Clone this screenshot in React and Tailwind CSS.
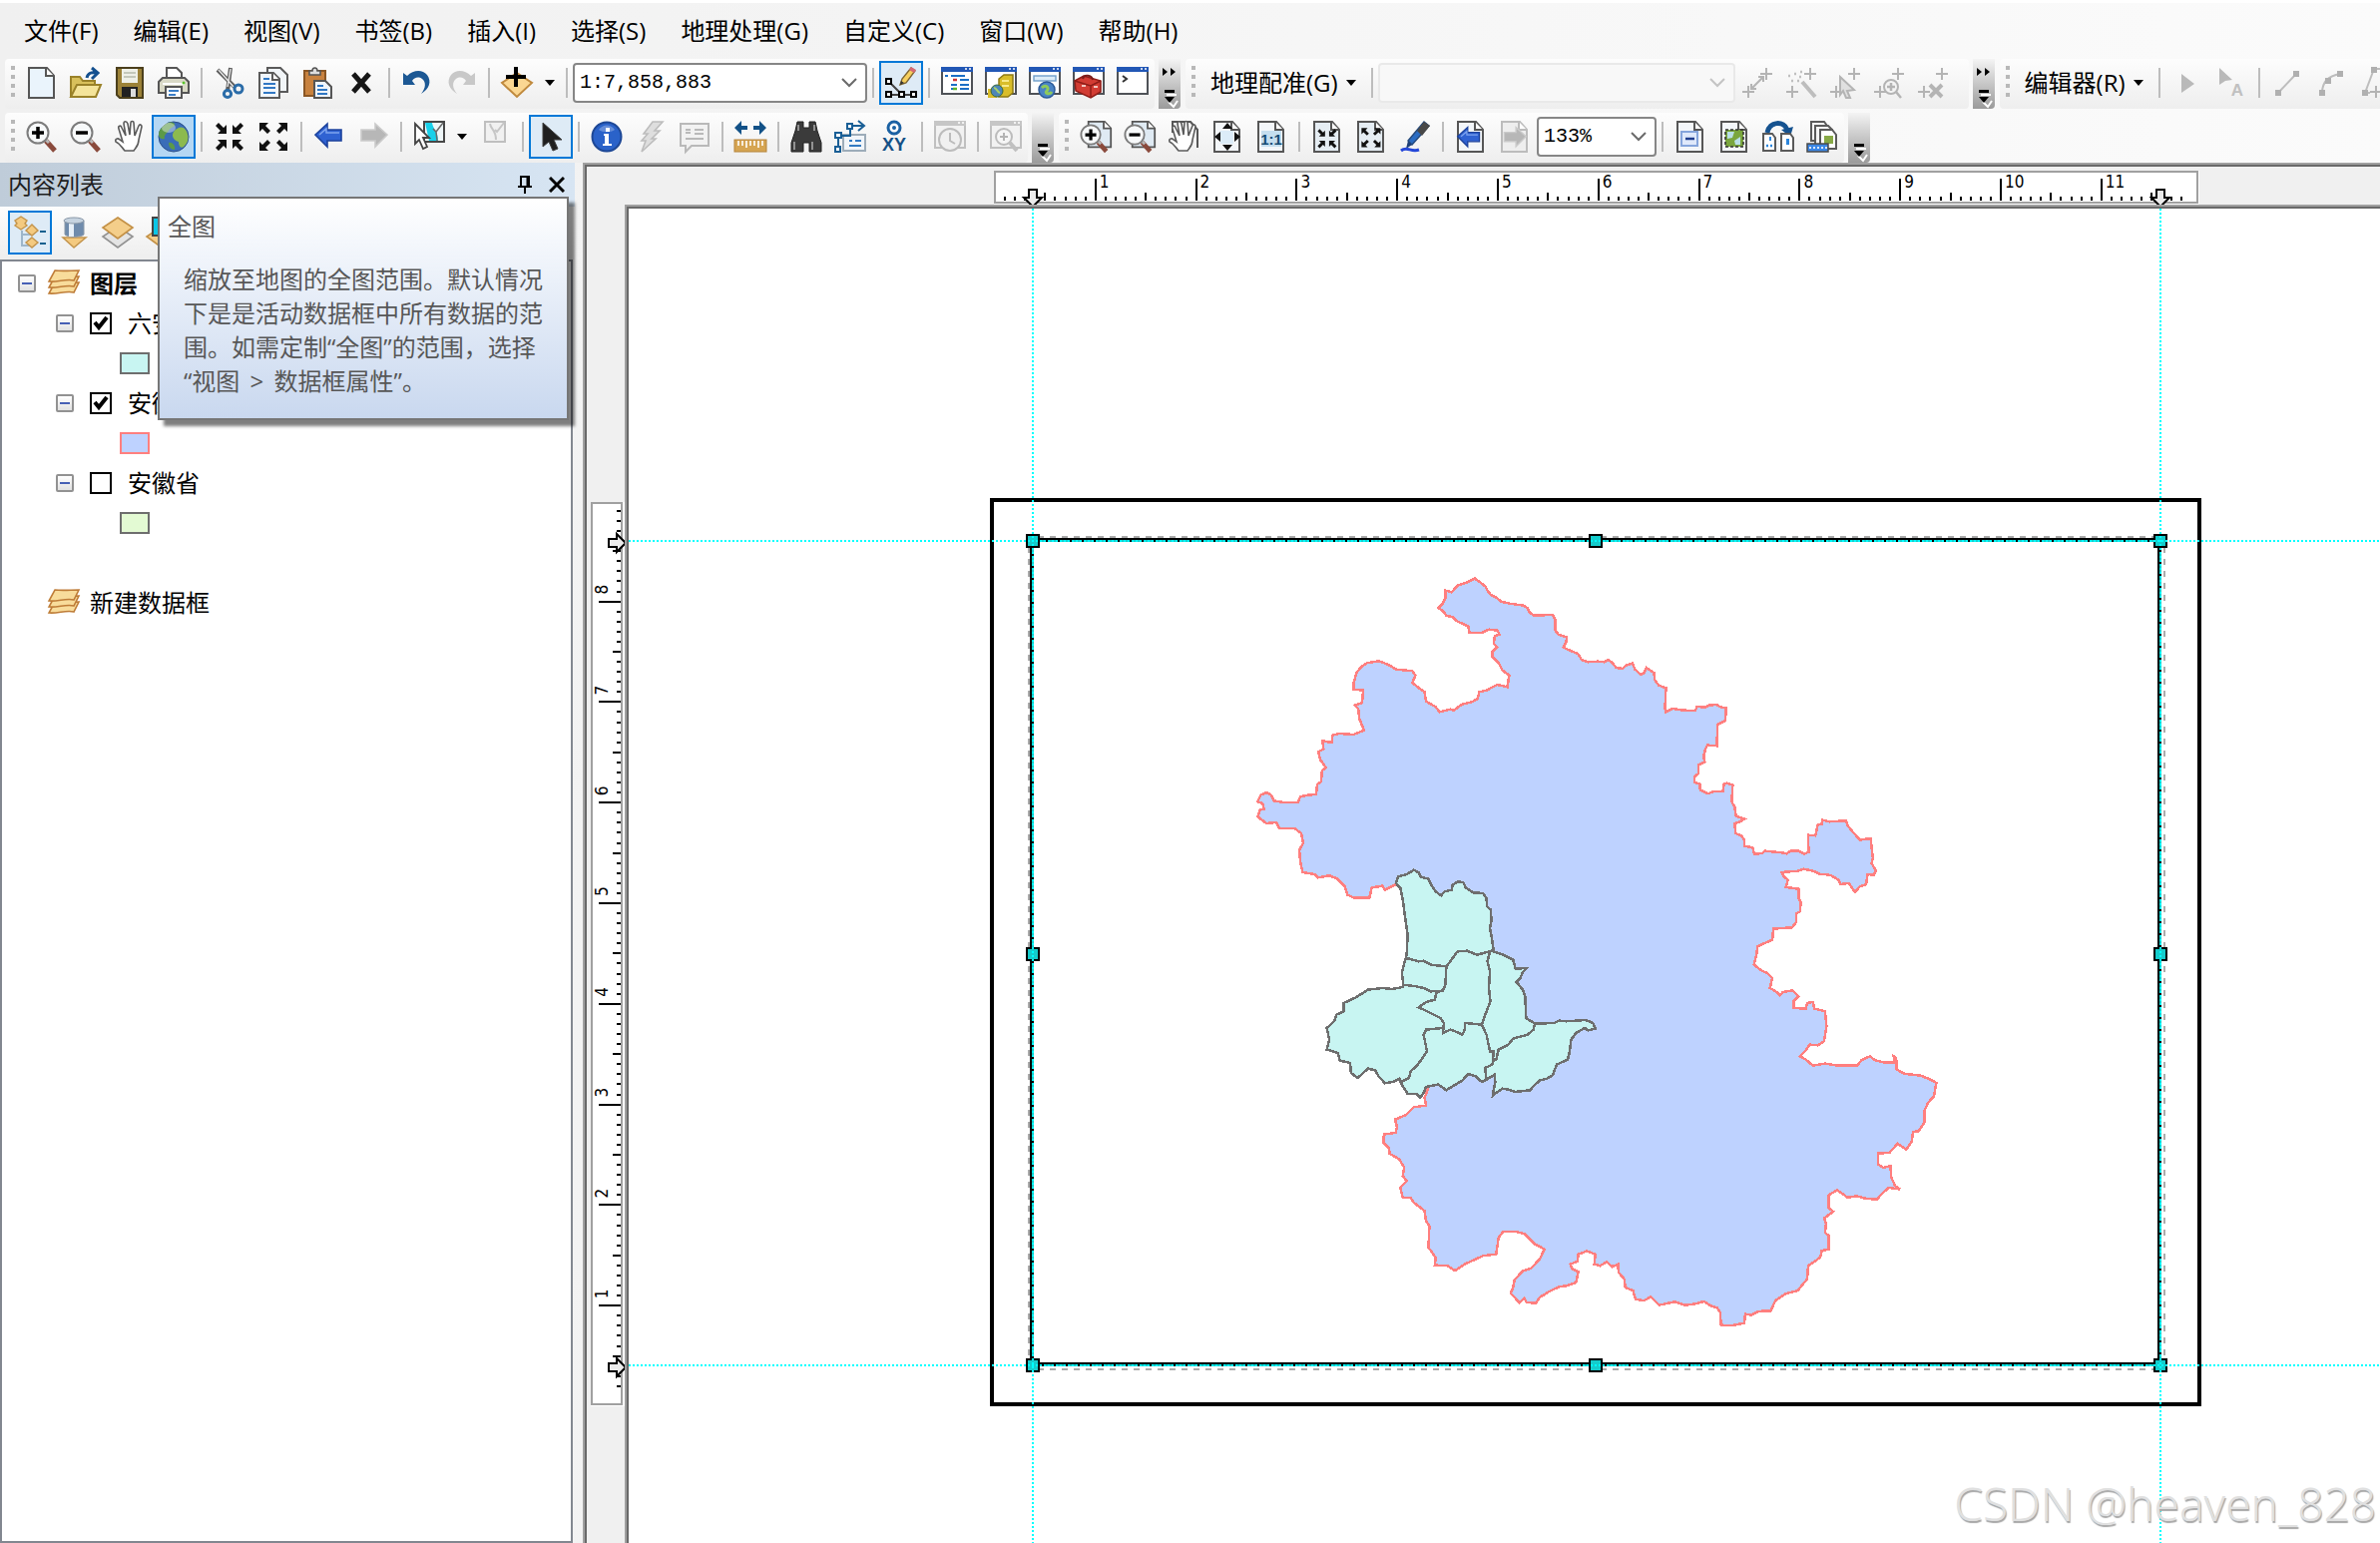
import React, { useState } from 'react'
import clsx from 'clsx'

const UI_FONT = "font-['Open_Sans','Noto_Sans_CJK_SC',sans-serif]"
const MONO_FONT = "font-['Liberation_Mono','Noto_Sans_CJK_SC',monospace]"

const MENUS = [
  '文件(F)', '编辑(E)', '视图(V)', '书签(B)', '插入(I)',
  '选择(S)', '地理处理(G)', '自定义(C)', '窗口(W)', '帮助(H)'
]

/* ---------- Shared icon parts (32 x 32 grid) ---------- */

const Page = ({ color = '#565656', fill = '#f3f6f9' }) => (
  <>
    <path d="M3 1h18l7 8v22H3z" fill={fill} stroke={color} strokeWidth="2" />
    <path d="M20 1v8h8" fill="#fff" stroke={color} strokeWidth="2" />
  </>
)

const Frame = ({ color = '#4f5257', bar = '#2257b5', fill = '#fff' }) => (
  <>
    <rect x="1" y="1" width="30" height="26" fill={fill} stroke={color} strokeWidth="2" />
    <rect x="0" y="0" width="32" height="5" fill={bar} />
    <path d="M24 2h2M28 2h2" stroke="#fff" strokeWidth="1.5" />
  </>
)

const Lens = ({ plus, minus }) => (
  <>
    <path d="M20 20l9 10" stroke="#8a4a3c" strokeWidth="5" />
    <path d="M19 18l4 4" stroke="#b9b9b9" strokeWidth="3" />
    <circle cx="12" cy="12" r="10.5" fill="#f7f9fa" stroke="#7c7c7c" strokeWidth="2" />
    {plus && <path d="M6 12h12M12 6v12" stroke="#000" strokeWidth="3.5" />}
    {minus && <path d="M6 12h12" stroke="#000" strokeWidth="3.5" />}
  </>
)

const Hand = () => (
  <path
    d="M11 30c-3-3-4-7-9-9-1-3 2-4 4-2l3 2-4-13c-1-3 2-4 3-1l4 8-2-12c0-3 3-3 4 0l2 11 1-12c0-2 3-2 3 0l1 13 4-10c1-2 3-1 3 1l-3 13c0 6-3 8-5 11z"
    fill="#fff" stroke="#5b5b5b" strokeWidth="1.6"
  />
)

const ArrowLeft = () => (
  <>
    <path d="M2 14L14 3v6h14v11H14v6z" fill="#2f62d2" stroke="#1c429c" strokeWidth="1.6" />
    <path d="M6 14l7-6v4h13" fill="none" stroke="#7ea4ee" strokeWidth="1.5" />
  </>
)

const ArrowRight = () => (
  <path d="M30 14L18 3v6H4v11h14v6z" fill="#b7b7b7" stroke="#cbcbcb" strokeWidth="1.6" />
)

const Inward = () => (
  <path d="M13 13H4l3-3-5-5 3-3 5 5 3-3zM19 13h9l-3-3 5-5-3-3-5 5-3-3zM13 19H4l3 3-5 5 3 3 5-5 3 3zM19 19h9l-3 3 5 5-3 3-5-5-3 3z" fill="#111" />
)

const Outward = () => (
  <path d="M2 2h9L8 5l5 5-3 3-5-5-3 3zM30 2h-9l3 3-5 5 3 3 5-5 3 3zM2 30h9l-3-3 5-5-3-3-5 5-3-3zM30 30h-9l3-3-5-5 3-3 5 5 3-3z" fill="#111" />
)

const TURN = 'M2 6l4 3C12 3 21 2 26 8c5 7 2 14-6 19 5-6 5-12 1-15-4-3-8-1-10 2l3 4H2z'

const Cross = ({ x, y }) => <path d={`M${x - 6} ${y}h12M${x} ${y - 6}v12`} stroke="#b4b4b4" strokeWidth="2" />

const Diamond = ({ y = 10 }) => (
  <path d={`M16 ${y - 10}l15 10-15 11L1 ${y}z`} fill="#f4ce8a" stroke="#c39045" strokeWidth="1.6" />
)

const Layers = () => (
  <>
    {[15, 9, 3].map(y => (
      <path key={y} d={`M7 ${y}c8 1 16 0 24 0l-5 10c-8-2-16 2-25 1z`} fill="#f8dc9b" stroke="#bf7d38" strokeWidth="1.6" />
    ))}
  </>
)

const ICONS = {
  newDoc: <Page fill="#eaf4fc" />,
  open: (
    <>
      <path d="M1 30V10h9l3 4h12v5" fill="#d8c05b" stroke="#9a8229" strokeWidth="2" />
      <path d="M1 30l6-12h24l-5 12z" fill="#f4e49a" stroke="#9a8229" strokeWidth="2" />
      <path d="M17 11c1-5 5-6 9-5M22 1l6 5-6 6" fill="none" stroke="#14508f" strokeWidth="3" />
    </>
  ),
  save: (
    <>
      <path d="M3 1h26v30H6l-3-3z" fill="#9c8238" stroke="#4b3f1c" strokeWidth="2" />
      <rect x="8" y="2" width="16" height="14" fill="#eef0e8" />
      <path d="M10 6h12M10 10h12" stroke="#c4c8bb" strokeWidth="2" />
      <rect x="8" y="20" width="16" height="10" fill="#222" />
      <rect x="17" y="22" width="5" height="8" fill="#ddd" />
    </>
  ),
  print: (
    <>
      <path d="M9 13V1h10l5 5v8z" fill="#fff" stroke="#555" strokeWidth="2" />
      <path d="M1 15l4-4h22l4 4v11H1z" fill="#d9d9c6" stroke="#555" strokeWidth="2" />
      <path d="M5 17h22" stroke="#fff" strokeWidth="2" />
      <circle cx="26" cy="16" r="1.5" fill="#59c32a" />
      <rect x="8" y="20" width="16" height="11" fill="#fff" stroke="#555" strokeWidth="2" />
      <path d="M11 24h10M11 28h7" stroke="#3c7fc8" strokeWidth="2" />
    </>
  ),
  cut: (
    <>
      <path d="M4 3l17 17M17 1l-3 23" stroke="#5d5d5d" strokeWidth="4" />
      <path d="M5 3l15 17M17 2l-3 18" stroke="#e7e7e7" strokeWidth="1.4" />
      <circle cx="25" cy="22" r="4" fill="none" stroke="#2b6ca8" strokeWidth="3" />
      <circle cx="14" cy="27" r="3.6" fill="none" stroke="#2b6ca8" strokeWidth="3" />
    </>
  ),
  copy: (
    <>
      <path d="M10 1h13l7 7v17H10z" fill="#f1f5f8" stroke="#5a5a5a" strokeWidth="2" />
      <path d="M2 6h14l6 6v19H2z" fill="#f1f6fb" stroke="#5a5a5a" strokeWidth="2" />
      <path d="M15 6v7h7" fill="#fff" stroke="#5a5a5a" strokeWidth="2" />
      <path d="M6 12h6M6 17h12M6 21h12M6 26h12" stroke="#3178c4" strokeWidth="2" />
    </>
  ),
  paste: (
    <>
      <rect x="3" y="4" width="21" height="25" fill="#c8823f" stroke="#8a5624" strokeWidth="2" />
      <path d="M8 8V4h3c0-4 5-4 5 0h3v4z" fill="#ddd" stroke="#555" strokeWidth="1.6" />
      <path d="M13 14h11l6 6v11H13z" fill="#f1f6fb" stroke="#555" strokeWidth="2" />
      <path d="M16 19h6M16 23h10M16 27h10" stroke="#3178c4" strokeWidth="2" />
    </>
  ),
  remove: <path d="M8 7l16 18M24 7L8 25" stroke="#161616" strokeWidth="5" />,
  undo: <path d={TURN} fill="#1c5894" />,
  redo: <path d={TURN} transform="translate(32 0) scale(-1 1)" fill="#c8c8c8" />,
  addData: (
    <>
      <path d="M16 6l15 10-15 14L1 16z" fill="#fbd792" stroke="#c08a3e" strokeWidth="2" />
      <path d="M15 0v20M5 10h20" stroke="#000" strokeWidth="4" />
    </>
  ),
  editTools: (
    <>
      <path d="M3 14l14 14M3 28h26" stroke="#444" strokeWidth="2" />
      <path d="M1 12h5v5H1zM1 25h5v5H1zM14 25h5v5h-5zM26 25h5v5h-5z" fill="#fff" stroke="#000" strokeWidth="2" />
      <path d="M15 18l2-6L26 1l4 3-9 12z" fill="#f6cf5e" stroke="#7d6532" strokeWidth="1.4" />
      <path d="M24 3l2-3 5 3-2 3z" fill="#d56a74" />
      <path d="M15 18l1-4 3 2z" fill="#333" />
    </>
  ),
  toc: (
    <>
      <Frame />
      <path d="M4 9h3M10 9h14M10 18h6M10 22h6" stroke="#1c6fc5" strokeWidth="2" />
      <path d="M12 13h4" stroke="#d03434" strokeWidth="2.5" />
      <path d="M19 13h9M19 18h9M19 22h9" stroke="#1c6fc5" strokeWidth="2" />
      <path d="M12 22h4" stroke="#58b52c" strokeWidth="2.5" />
    </>
  ),
  catalog: (
    <>
      <Frame />
      <path d="M14 12l5-4h9v18l-5 4h-9z" fill="#d9bd2a" stroke="#8f7a13" strokeWidth="1.5" />
      <path d="M17 14h7M17 19h7" stroke="#f7e98a" strokeWidth="2" />
      <path d="M3 22h9v9H3z" fill="#d9bd2a" />
      <circle cx="12" cy="24" r="6" fill="#4d86b8" stroke="#3c6b3a" />
      <path d="M9 21c3 0 3 4 6 5" stroke="#a5d06a" strokeWidth="2" fill="none" />
    </>
  ),
  search: (
    <>
      <Frame />
      <rect x="5" y="9" width="22" height="5" fill="#dcecf8" stroke="#6f9fca" strokeWidth="1.4" />
      <circle cx="18" cy="23" r="8" fill="#4a84c6" stroke="#2c5a98" strokeWidth="1.5" />
      <path d="M13 21c4-4 8 0 5 3s3 4 5 1" stroke="#8fca5b" strokeWidth="3" fill="none" />
    </>
  ),
  toolbox: (
    <>
      <Frame />
      <path d="M2 14l9-5 17 5v11l-10 6-15-7z" fill="#d23c33" stroke="#8e1d18" strokeWidth="1.5" />
      <path d="M2 14l16 5 10-5M18 19v11" stroke="#8e1d18" strokeWidth="1.5" fill="none" />
      <path d="M10 12c1-5 9-4 10 1" stroke="#7a1d1a" strokeWidth="2" fill="none" />
      <path d="M9 19h4M21 20h4" stroke="#f2c5bf" strokeWidth="2" />
    </>
  ),
  python: (
    <>
      <Frame />
      <path d="M6 9l4 3-4 3" fill="none" stroke="#333" strokeWidth="2" />
    </>
  ),
  zoomIn: <Lens plus />,
  zoomOut: <Lens minus />,
  pan: <Hand />,
  globe: (
    <>
      <circle cx="16" cy="16" r="15" fill="#3a6db8" stroke="#2c4f8a" />
      <path d="M4 7C10 0 15 1 17 3c0 4-4 3-6 7-2 3-5 4-4 8-3 1-6-1-6-4 0-3 1-5 3-7z" fill="#5c9a48" />
      <path d="M16 11c4-5 9-6 12-2 4 6 3 13-2 17-3 2-5-1-5-5-4-1-8-5-5-10z" fill="#8cba4f" />
      <path d="M11 22c3-1 7 2 6 7-4 0-6-3-6-7z" fill="#5c9a48" />
      <ellipse cx="11" cy="7" rx="7" ry="5" fill="#fff" opacity=".4" />
    </>
  ),
  fixedIn: <Inward />,
  fixedOut: <Outward />,
  back: <ArrowLeft />,
  forward: <ArrowRight />,
  selectFeat: (
    <>
      <rect x="11" y="1" width="20" height="20" fill="#eef6f8" stroke="#474747" strokeWidth="2" />
      <path d="M12 2h7c1 7 6 8 6 18h-9z" fill="#17d0ea" />
      <path d="M20 8l3 3 7-9M23 11l1 9" fill="none" stroke="#6a6a6a" strokeWidth="1.5" />
      <path d="M2 3l14 14h-6l4 9-4 2-4-9-4 4z" fill="#fff" stroke="#444" strokeWidth="1.8" />
    </>
  ),
  clearSel: (
    <>
      <rect x="6" y="1" width="20" height="20" fill="#f1f1f1" stroke="#bfbfbf" strokeWidth="2" />
      <path d="M11 3c1 6 6 6 6 16M16 9l2 2 7-9" fill="none" stroke="#c6c6c6" strokeWidth="2" />
    </>
  ),
  pointer: <path d="M8 2v24l6-5 4 9 5-2-4-9h8z" fill="#1f1f1f" stroke="#3f3f3f" strokeWidth="1" />,
  identify: (
    <>
      <circle cx="16" cy="16" r="14.5" fill="#2a62c9" stroke="#1e4896" strokeWidth="2" />
      <path d="M8 9c4-6 12-6 16 0-4 3-12 3-16 0z" fill="#fff" opacity=".28" />
      <path d="M15 7h4v4h-4zM13 13h5v10h3v2h-9v-2h2v-8h-1z" fill="#fff" />
    </>
  ),
  lightning: <path d="M18 1h10l-8 9h5l-8 8h4L7 31l4-11H7l6-7H9z" fill="#dedede" stroke="#bdbdbd" strokeWidth="1.6" />,
  popup: (
    <>
      <path d="M2 3h28v22H13l-6 6v-6H2z" fill="#f2f2f2" stroke="#b9b9b9" strokeWidth="2" />
      <path d="M7 9h5M7 12h5M16 9h9M16 13h9M7 18h18" stroke="#b9b9b9" strokeWidth="2" />
    </>
  ),
  measure: (
    <>
      <path d="M0 7l7-7v5h6v4H7v5zM32 7l-7-7v5h-6v4h6v5z" fill="#125187" />
      <rect x="0" y="19" width="32" height="12" fill="#d6a552" stroke="#b5843a" />
      <path d="M4 20v5M8 20v5M12 20v7M16 20v5M20 20v5M24 20v7M28 20v5" stroke="#fff" strokeWidth="1.6" />
    </>
  ),
  find: (
    <>
      <path d="M7 1h6v6h6V1h6l2 9 4 12v9H19v-9h-6v9H1v-9l4-12z" fill="#3b3b3b" stroke="#222" />
      <path d="M8 4v6M24 4v6M4 21v8M22 21v8" stroke="#929292" strokeWidth="2" />
    </>
  ),
  findRoute: (
    <>
      <rect x="9" y="14" width="22" height="16" fill="#f1f5f9" stroke="#9dacb9" strokeWidth="2" />
      <path d="M15 20h3M21 20h6M15 25h12" stroke="#337ac2" strokeWidth="2" />
      <path d="M4 29V15h12V5h13M24 0l6 5-6 5" fill="none" stroke="#1a5f96" strokeWidth="2" />
      <path d="M1 12h6v5H1zM1 26h5v5H1zM13 3h5v5h-5z" fill="#fff" stroke="#1a5f96" strokeWidth="2" />
    </>
  ),
  goToXY: (
    <>
      <circle cx="16" cy="7" r="6" fill="#fff" stroke="#1b61a3" strokeWidth="3" />
      <circle cx="16" cy="7" r="2" fill="#1b61a3" />
      <text x="16" y="30" textAnchor="middle" fontSize="18" fontWeight="700" fontFamily="Liberation Sans" fill="#155186">XY</text>
    </>
  ),
  time: (
    <>
      <Frame color="#c0c0c0" bar="#c6c6c6" fill="#f2f2f2" />
      <circle cx="16" cy="19" r="11" fill="#f0f0f0" stroke="#bcbcbc" strokeWidth="2" />
      <path d="M16 12v8l5 3" fill="none" stroke="#bcbcbc" strokeWidth="2" />
    </>
  ),
  viewer: (
    <>
      <Frame color="#c0c0c0" bar="#c6c6c6" fill="#f2f2f2" />
      <path d="M20 22l7 8" stroke="#c0c0c0" strokeWidth="4" />
      <circle cx="14" cy="16" r="8" fill="#f6f6f6" stroke="#bcbcbc" strokeWidth="2" />
      <path d="M10 16h8M14 12v8" stroke="#b4b4b4" strokeWidth="2" />
    </>
  ),
  pageIn: (
    <>
      <g transform="translate(6 0) scale(.9 .85)"><Page fill="#dfeaf3" /></g>
      <g transform="translate(0 3) scale(.92)"><Lens plus /></g>
    </>
  ),
  pageOut: (
    <>
      <g transform="translate(6 0) scale(.9 .85)"><Page fill="#dfeaf3" /></g>
      <g transform="translate(0 3) scale(.92)"><Lens minus /></g>
    </>
  ),
  pagePan: (
    <>
      <path d="M5 12V1h18l7 8v18" fill="#f3f3f3" stroke="#565656" strokeWidth="2" />
      <Hand />
    </>
  ),
  pageFit: (
    <>
      <Page />
      <rect x="9" y="10" width="13" height="13" fill="#dcecf8" />
      <path d="M16 2l5 6H11zM16 30l5-6H11zM3 16l6-5v10zM29 16l-6-5v10z" fill="#111" />
    </>
  ),
  pageActual: (
    <>
      <Page />
      <rect x="6" y="10" width="20" height="16" fill="#c5deef" />
      <text x="16" y="24" textAnchor="middle" fontSize="15" fontWeight="700" fontFamily="Liberation Sans" fill="#164d74">1:1</text>
    </>
  ),
  pageFixedIn: (
    <>
      <Page fill="#e5edf3" />
      <g transform="translate(5 7) scale(.68)"><Inward /></g>
    </>
  ),
  pageFixedOut: (
    <>
      <Page fill="#e5edf3" />
      <g transform="translate(5 6) scale(.68)"><Outward /></g>
    </>
  ),
  draft: (
    <>
      <path d="M9 20L25 1l5 4-17 19z" fill="#2b6cc2" stroke="#264a7c" strokeWidth="1.4" />
      <path d="M18 10l7-9 6 4-8 10z" fill="#484848" />
      <path d="M9 20l4 4-6 4z" fill="#1d3f77" />
      <path d="M2 30c6-5 10 2 18-1" fill="none" stroke="#2547d8" strokeWidth="3" />
    </>
  ),
  pageBack: (
    <>
      <Page />
      <g transform="translate(1 4) scale(.84)"><ArrowLeft /></g>
    </>
  ),
  pageForward: (
    <>
      <Page color="#bcbcbc" fill="#eee" />
      <g transform="translate(2 4) scale(.84)"><ArrowRight /></g>
    </>
  ),
  toggleDraft: (
    <>
      <Page />
      <rect x="7" y="11" width="16" height="14" fill="#dfe9fb" stroke="#85a5dc" strokeWidth="2" />
      <path d="M11 18h9" stroke="#1e3d8d" strokeWidth="2.5" />
    </>
  ),
  focusFrame: (
    <>
      <Page />
      <rect x="7" y="9" width="18" height="17" fill="#7aa63e" stroke="#333" strokeWidth="1.6" strokeDasharray="3 2" />
      <path d="M9 11h7l-2 6-5 1zM16 20l6-4v8h-5z" fill="#b9dfe6" />
    </>
  ),
  changeLayout: (
    <>
      <path d="M5 12C7 0 22 0 25 9" fill="none" stroke="#165390" strokeWidth="5" />
      <path d="M19 9l12-3-3 10z" fill="#165390" />
      <path d="M1 13h9l3 4v13H1zM19 13h9l3 4v13H19z" fill="#fff" stroke="#5a5a5a" strokeWidth="2" />
      <path d="M7 16h2v4H7zM24 18h3v6h-3z" fill="#2c86dd" />
      <path d="M4 25h2M8 25h2" stroke="#2c86dd" strokeWidth="2.5" />
    </>
  ),
  dataDriven: (
    <>
      <path d="M5 1h13l3 4v15H5z" fill="#f4f4f4" stroke="#5a5a5a" strokeWidth="2" />
      <path d="M9 5h13l4 4v15H9z" fill="#f4f4f4" stroke="#5a5a5a" strokeWidth="2" />
      <path d="M14 9h12l4 5v14H14z" fill="#fff" stroke="#5a5a5a" strokeWidth="2" />
      <rect x="18" y="15" width="9" height="8" fill="#87a946" />
      <rect x="1" y="23" width="21" height="8" fill="#3b87e6" stroke="#4b4b4b" strokeWidth="1.5" />
      <path d="M4 26v2M8 26v2M12 26v2M16 26v2M20 26v2" stroke="#fff" strokeWidth="1.6" />
    </>
  ),
  addControl: (
    <>
      <Cross x={7} y={25} />
      <Cross x={25} y={7} />
      <path d="M10 22l12-12M10 17v5h5M17 10h5v5" fill="none" stroke="#b4b4b4" strokeWidth="2" />
    </>
  ),
  autoReg: (
    <>
      <Cross x={7} y={25} />
      <Cross x={25} y={7} />
      <path d="M17 15l13 15" stroke="#bdbdbd" strokeWidth="4" />
      <path d="M3 9h2M9 7h2M14 10h2M6 14h2M12 14h2M15 5h2" stroke="#c0c0c0" strokeWidth="2.5" />
    </>
  ),
  selectLink: (
    <>
      <Cross x={7} y={25} />
      <Cross x={25} y={7} />
      <path d="M11 10l14 13-7 1 3 7h-4l-3-7-3 4z" fill="#e0e0e0" stroke="#b4b4b4" strokeWidth="2" />
    </>
  ),
  zoomLink: (
    <>
      <Cross x={7} y={25} />
      <Cross x={25} y={7} />
      <circle cx="18" cy="20" r="7" fill="#f4f4f4" stroke="#b4b4b4" strokeWidth="2" />
      <path d="M23 25l5 6M14 20h8M18 16v8" stroke="#b4b4b4" strokeWidth="2.5" />
    </>
  ),
  deleteLink: (
    <>
      <Cross x={7} y={25} />
      <Cross x={25} y={7} />
      <path d="M13 18l12 12M25 18L13 30" stroke="#b4b4b4" strokeWidth="4" />
    </>
  ),
  editTool: <path d="M10 7l13 10-13 9z" fill="#b9b9b9" />,
  editAnno: (
    <>
      <path d="M4 1l13 12-7 1-6 4z" fill="#b9b9b9" />
      <text x="22" y="29" textAnchor="middle" fontSize="17" fontWeight="700" fontFamily="Liberation Sans" fill="#c0c0c0">A</text>
    </>
  ),
  segment: (
    <>
      <path d="M7 26L25 7" stroke="#bdbdbd" strokeWidth="2" />
      <path d="M4 23h6v6H4zM22 4h6v6h-6z" fill="#b0b0b0" />
    </>
  ),
  arc: (
    <>
      <path d="M7 26c0-10 6-17 18-19" fill="none" stroke="#bdbdbd" strokeWidth="2" />
      <path d="M4 23h6v6H4zM22 4h6v6h-6zM10 11h6v6h-6z" fill="#b0b0b0" />
    </>
  ),
  trace: (
    <>
      <path d="M15 2L6 26M15 2h17M6 26h5" fill="none" stroke="#bdbdbd" strokeWidth="2" />
      <path d="M12 0h6v6h-6zM3 23h6v6H3z" fill="#b0b0b0" />
      <Cross x={17} y={25} />
    </>
  ),
  listOrder: (
    <>
      <path d="M8 14v15h9M8 18h9" fill="none" stroke="#9db6cb" strokeWidth="2" />
      <path d="M26 15h6M26 27h6" stroke="#17608f" strokeWidth="2" />
      <path d="M7 0l6 4-2 3 2 2-6 4-6-4 2-2-2-3zM18 8l6 6-6 5-6-5zM18 21l6 5-6 5-6-5z" fill="#f4ca80" stroke="#c3944c" strokeWidth="1.4" />
    </>
  ),
  listSource: (
    <>
      <path d="M16 31L5 21h23z" fill="#f4ca80" stroke="#c3944c" strokeWidth="1.5" />
      <path d="M7 4v14c3 3 16 3 19 0V4z" fill="#6f8bac" stroke="#8a98a8" />
      <path d="M11 6v14h5V6z" fill="#e7eff7" />
      <ellipse cx="16" cy="4" rx="10" ry="3" fill="#c6d3e0" stroke="#8a98a8" />
    </>
  ),
  listVisible: (
    <>
      <path d="M16 10l15 10-15 11L1 20z" fill="#e4e4e4" stroke="#929292" strokeWidth="1.6" />
      <Diamond y={11} />
    </>
  ),
  listSelection: (
    <>
      <Diamond y={20} />
      <rect x="7" y="1" width="20" height="18" fill="#0bc6e6" stroke="#444" strokeWidth="2" />
    </>
  ),
  layers: <Layers />
}

const Icon = ({ name }) => (
  <svg viewBox="0 0 32 32" className="size-8 shrink-0 overflow-visible" aria-hidden="true">{ICONS[name]}</svg>
)

/* ---------- Toolbar building blocks ---------- */

const ToolButton = ({ icon, label, active, strong, disabled }) => (
  <button
    type="button"
    aria-label={label}
    disabled={disabled}
    className={clsx(
      'flex size-11 shrink-0 items-center justify-center border-2',
      !active && 'border-transparent',
      active && 'border-[#0078d7]',
      active && (strong ? 'bg-[#b5d7f3]' : 'bg-[#deebf6]')
    )}
  >
    <Icon name={icon} />
  </button>
)

const Separator = () => <span className="mx-[5px] h-[30px] w-0.5 shrink-0 bg-[#bdbdbd]" />

const Caret = ({ label }) => (
  <button type="button" aria-label={label} className="flex h-11 w-[22px] shrink-0 items-center justify-center">
    <svg viewBox="0 0 10 6" className="h-1.5 w-2.5"><path d="M0 0h10L5 6z" fill="#000" /></svg>
  </button>
)

const Grip = () => (
  <svg viewBox="0 0 4 34" className="mr-[5px] ml-1.5 h-[34px] w-1 shrink-0" aria-hidden="true">
    <path d="M0 2h4M0 11h4M0 20h4M0 29h4" stroke="#b8b8b8" strokeWidth="4" />
  </svg>
)

const Overflow = ({ arrows }) => (
  <button
    type="button"
    aria-label="工具栏选项"
    className="ml-1 h-[50px] w-[22px] shrink-0 rounded-br-sm bg-linear-to-b from-[#f4f4f4] to-[#9b9b9b]"
  >
    <svg viewBox="0 0 22 50" className="h-[50px] w-[22px]">
      {arrows && <path d="M4 9v8l5-4zM12 9v8l5-4z" fill="#000" />}
      <path d="M8 36h10M10 43l5 5 4-6" stroke="#fff" strokeWidth="2" fill="none" />
      <path d="M6 31h10v3H6zM6 38h10l-5 6z" fill="#000" />
    </svg>
  </button>
)

const Toolbar = ({ label, children }) => (
  <div
    role="toolbar"
    aria-label={label}
    className="ml-[5px] flex h-[50px] shrink-0 items-center rounded-sm bg-linear-to-b from-[#fdfdfd] to-[#eeeeee] pb-0.5"
  >
    <Grip />
    {children}
  </div>
)

const Combo = ({ label, value, disabled, className }) => (
  <span className={clsx('grid h-10 shrink-0 items-center', className)}>
    <select
      aria-label={label}
      disabled={disabled}
      defaultValue={value}
      className={clsx(
        'col-start-1 row-start-1 h-10 w-full appearance-none rounded-sm border-2 pl-[5px] text-[20px] leading-8',
        MONO_FONT,
        disabled ? 'border-[#e9e9e9] bg-[#f8f8f8]' : 'border-[#868686] bg-white text-black'
      )}
    >
      <option>{value}</option>
    </select>
    <svg viewBox="0 0 16 10" className="pointer-events-none col-start-1 row-start-1 mr-2.5 h-2.5 w-4 justify-self-end">
      <path d="M1 1l7 7 7-7" fill="none" stroke={disabled ? '#c4c4c4' : '#6b6b6b'} strokeWidth="2" />
    </svg>
  </span>
)

const TextMenu = ({ children }) => (
  <button type="button" className="flex h-11 shrink-0 items-center gap-2 px-2.5 text-[24px] leading-8 whitespace-nowrap">
    {children}
    <svg viewBox="0 0 10 6" className="h-1.5 w-2.5"><path d="M0 0h10L5 6z" fill="#000" /></svg>
  </button>
)

const MenuBar = () => (
  <nav aria-label="主菜单" className="flex h-[59px] items-center gap-[3px] border-t-[3px] border-white pl-2">
    {MENUS.map(item => (
      <button key={item} type="button" className="px-4 text-[24px] leading-8 whitespace-nowrap">{item}</button>
    ))}
  </nav>
)

const Toolbars = () => (
  <div className="flex flex-col gap-1">
    <div className="flex overflow-hidden">
      <Toolbar label="标准工具">
        <ToolButton icon="newDoc" label="新建" />
        <ToolButton icon="open" label="打开" />
        <ToolButton icon="save" label="保存" />
        <ToolButton icon="print" label="打印" />
        <Separator />
        <ToolButton icon="cut" label="剪切" />
        <ToolButton icon="copy" label="复制" />
        <ToolButton icon="paste" label="粘贴" />
        <ToolButton icon="remove" label="删除" />
        <Separator />
        <ToolButton icon="undo" label="撤消" />
        <ToolButton icon="redo" label="恢复" disabled />
        <Separator />
        <ToolButton icon="addData" label="添加数据" />
        <Caret label="添加数据选项" />
        <Separator />
        <Combo label="地图比例" value="1:7,858,883" className="w-[295px]" />
        <Separator />
        <ToolButton icon="editTools" label="编辑器工具条" active />
        <Separator />
        <ToolButton icon="toc" label="内容列表" />
        <ToolButton icon="catalog" label="目录" />
        <ToolButton icon="search" label="搜索" />
        <ToolButton icon="toolbox" label="工具箱" />
        <ToolButton icon="python" label="Python" />
      </Toolbar>
      <Overflow arrows />
      <Toolbar label="地理配准">
        <TextMenu>地理配准(G)</TextMenu>
        <Separator />
        <Combo label="配准图层" value="" disabled className="w-[358px]" />
        <ToolButton icon="addControl" label="添加控制点" disabled />
        <ToolButton icon="autoReg" label="自动配准" disabled />
        <ToolButton icon="selectLink" label="选择链接" disabled />
        <ToolButton icon="zoomLink" label="缩放至链接" disabled />
        <ToolButton icon="deleteLink" label="删除链接" disabled />
        <span className="w-3.5" />
      </Toolbar>
      <Overflow arrows />
      <Toolbar label="编辑器">
        <TextMenu>编辑器(R)</TextMenu>
        <Separator />
        <ToolButton icon="editTool" label="编辑工具" disabled />
        <ToolButton icon="editAnno" label="编辑注记" disabled />
        <Separator />
        <ToolButton icon="segment" label="直线段" disabled />
        <ToolButton icon="arc" label="弧段" disabled />
        <ToolButton icon="trace" label="追踪" disabled />
      </Toolbar>
    </div>

    <div className="flex overflow-hidden">
      <Toolbar label="工具">
        <ToolButton icon="zoomIn" label="放大" />
        <ToolButton icon="zoomOut" label="缩小" />
        <ToolButton icon="pan" label="平移" />
        <ToolButton icon="globe" label="全图" active strong />
        <Separator />
        <ToolButton icon="fixedIn" label="固定比例放大" />
        <ToolButton icon="fixedOut" label="固定比例缩小" />
        <Separator />
        <ToolButton icon="back" label="后退" />
        <ToolButton icon="forward" label="前进" disabled />
        <Separator />
        <ToolButton icon="selectFeat" label="选择要素" />
        <Caret label="选择要素选项" />
        <ToolButton icon="clearSel" label="清除所选要素" disabled />
        <Separator />
        <ToolButton icon="pointer" label="选择元素" active />
        <Separator />
        <ToolButton icon="identify" label="识别" />
        <ToolButton icon="lightning" label="超链接" disabled />
        <ToolButton icon="popup" label="HTML 弹出窗口" disabled />
        <Separator />
        <ToolButton icon="measure" label="测量" />
        <Separator />
        <ToolButton icon="find" label="查找" />
        <ToolButton icon="findRoute" label="查找路径" />
        <ToolButton icon="goToXY" label="转到 XY" />
        <Separator />
        <ToolButton icon="time" label="时间滑块" disabled />
        <Separator />
        <ToolButton icon="viewer" label="查看器窗口" disabled />
      </Toolbar>
      <Overflow />
      <Toolbar label="布局">
        <ToolButton icon="pageIn" label="布局放大" />
        <ToolButton icon="pageOut" label="布局缩小" />
        <ToolButton icon="pagePan" label="布局平移" />
        <ToolButton icon="pageFit" label="缩放整个页面" />
        <ToolButton icon="pageActual" label="缩放至 100%" />
        <Separator />
        <ToolButton icon="pageFixedIn" label="页面固定放大" />
        <ToolButton icon="pageFixedOut" label="页面固定缩小" />
        <ToolButton icon="draft" label="绘制" />
        <Separator />
        <ToolButton icon="pageBack" label="上一范围" />
        <ToolButton icon="pageForward" label="下一范围" disabled />
        <Combo label="页面缩放" value="133%" className="w-[120px]" />
        <Separator />
        <ToolButton icon="toggleDraft" label="切换描绘模式" />
        <ToolButton icon="focusFrame" label="焦点数据框" />
        <ToolButton icon="changeLayout" label="更改布局" />
        <ToolButton icon="dataDriven" label="数据驱动页面" />
      </Toolbar>
      <Overflow />
    </div>
  </div>
)

/* ---------- Table of contents ---------- */

const Expander = ({ label }) => (
  <button
    type="button"
    aria-label={`折叠 ${label}`}
    className="flex size-[18px] shrink-0 items-center justify-center rounded-xs border-2 border-[#929292] bg-linear-to-b from-white to-[#e2e2e2]"
  >
    <span className="h-0.5 w-2.5 bg-[#4760b5]" />
  </button>
)

const Swatch = ({ className }) => (
  <div className="flex h-10 items-center pl-[118px]">
    <span className={clsx('h-[22px] w-[30px] border-2', className)} />
  </div>
)

const LayerRow = ({ name, initial, swatch }) => {
  const [visible, setVisible] = useState(initial)
  return (
    <li>
      <div className="flex h-10 items-center gap-4 pl-[54px]">
        <Expander label={name} />
        <label className="flex items-center gap-4">
          <span className="grid size-[22px]">
            <input
              type="checkbox"
              checked={visible}
              onChange={e => setVisible(e.target.checked)}
              className="col-start-1 row-start-1 size-[22px] appearance-none border-2 border-black bg-white"
            />
            {visible && (
              <svg viewBox="0 0 22 22" className="pointer-events-none col-start-1 row-start-1 size-[22px]">
                <path d="M5 10l4 5 8-10" fill="none" stroke="#000" strokeWidth="4" />
              </svg>
            )}
          </span>
          <span className="whitespace-nowrap">{name}</span>
        </label>
      </div>
      <Swatch className={swatch} />
    </li>
  )
}

const ContentsPanel = () => (
  <aside className="flex w-[576px] shrink-0 flex-col">
    <header className="flex h-11 items-center bg-linear-to-r from-[#bfccd9] to-[#d7e5f3] pr-1.5 pl-2">
      <h2 className="flex-1 text-[24px] leading-8 text-[#1e1e1e]">内容列表</h2>
      <button type="button" aria-label="自动隐藏" className="mr-2 flex size-6 items-center justify-center">
        <svg viewBox="0 0 16 20" className="h-5 w-4">
          <path d="M4 12V2h8v10M1 12h14M8 12v7" fill="none" stroke="#000" strokeWidth="2" />
          <path d="M11 2v10" stroke="#000" strokeWidth="3" />
        </svg>
      </button>
      <button type="button" aria-label="关闭" className="flex size-6 items-center justify-center">
        <svg viewBox="0 0 16 16" className="size-4">
          <path d="M1 1l14 14M15 1L1 15" stroke="#000" strokeWidth="3" />
        </svg>
      </button>
    </header>
    <div className="flex h-[53px] items-start bg-linear-to-b from-[#fdfdfd] to-[#eeeeee] pt-1 pl-2">
      <ToolButton icon="listOrder" label="按绘制顺序列出" active />
      <ToolButton icon="listSource" label="按源列出" />
      <ToolButton icon="listVisible" label="按可见性列出" />
      <ToolButton icon="listSelection" label="按选择列出" />
    </div>
    <ul className="mr-0.5 flex-1 border-2 border-[#828790] bg-white pt-0.5 text-[24px] leading-8">
      <li>
        <div className="flex h-10 items-center pl-4">
          <Expander label="图层" />
          <span className="mr-2.5 ml-3"><Icon name="layers" /></span>
          <span className="font-bold">图层</span>
        </div>
        <ul>
          <LayerRow name="六安市" initial swatch="border-[#6e6e6e] bg-[#c8f5f2]" />
          <LayerRow name="安徽省界" initial swatch="border-[#ff7f7f] bg-[#bed2ff]" />
          <LayerRow name="安徽省" initial={false} swatch="border-[#6e6e6e] bg-[#e3fad3]" />
        </ul>
      </li>
      <li className="mt-10 flex h-10 items-center gap-2.5 pl-[46px]">
        <Icon name="layers" />
        <span>新建数据框</span>
      </li>
    </ul>
  </aside>
)

const FullExtentTip = () => (
  <div
    role="tooltip"
    className="absolute top-[197px] left-[158px] w-[412px] border-2 border-[#767676] bg-linear-to-b from-white to-[#c9d8ef] px-2 pt-3 pb-5 text-[24px] text-[#575757] shadow-[6px_6px_3px_rgba(0,0,0,0.5)]"
  >
    <div className="leading-8">全图</div>
    <p className="mt-5 w-[376px] pl-4 leading-[34px]">
      缩放至地图的全图范围。默认情况<br />
      下是是活动数据框中所有数据的范<br />
      围。如需定制“全图”的范围，选择<br />
      “视图 <span className="px-1">&gt;</span> 数据框属性”。
    </p>
  </div>
)

/* ---------- Layout view ---------- */

const INCH = 100.8

const tickLength = i => (i % 10 === 0 ? 22 : i % 5 === 0 ? 8 : 4)

const MARKER = 'M-4 0v8h-5l9 9 9-9h-5v-8z'

// Ruler along the top of the page, origin at its left end
const TopRuler = () => (
  <svg className="ml-[408px] h-[34px] w-[1208px]" role="img" aria-label="水平标尺">
    <rect width="1208" height="34" fill="#fff" />
    <rect x="1" y="1" width="1205" height="31" fill="#fff" stroke="#a0a0a0" strokeWidth="2" />
    {Array.from({ length: 118 }, (_, k) => k + 1).map(i => (
      <rect key={i} x={Math.round((i * INCH) / 10)} y={30 - tickLength(i)} width="2" height={tickLength(i)} />
    ))}
    {Array.from({ length: 11 }, (_, k) => k + 1).map(n => (
      <text key={n} x={n * INCH + 5} y="17" fontSize="17" fontFamily="'DejaVu Sans Condensed', 'DejaVu Sans', sans-serif">{n}</text>
    ))}
    {[39, 1169].map(x => (
      <path key={x} d={MARKER} transform={`translate(${x} 19)`} fill="#ececec" stroke="#000" strokeWidth="2" />
    ))}
  </svg>
)

// Ruler along the left of the page, counted from the bottom up
const SideRuler = () => (
  <svg className="mt-[298px] ml-1 h-[906px] w-[34px]" role="img" aria-label="垂直标尺">
    <rect width="34" height="906" fill="#fff" />
    <rect x="1" y="1" width="30" height="903" fill="#fff" stroke="#a0a0a0" strokeWidth="2" />
    {Array.from({ length: 88 }, (_, k) => k + 2).map(i => (
      <rect key={i} x={30 - tickLength(i)} y={Math.round(905 - (i * INCH) / 10)} width={tickLength(i)} height="2" />
    ))}
    {Array.from({ length: 8 }, (_, k) => k + 1).map(n => (
      <text
        key={n}
        transform={`translate(17 ${905 - n * INCH - 6}) rotate(-90)`}
        fontSize="17"
        fontFamily="'DejaVu Sans Condensed', 'DejaVu Sans', sans-serif"
      >
        {n}
      </text>
    ))}
    {[41, 867].map(y => (
      <path key={y} d={MARKER} transform={`translate(18 ${y}) rotate(-90)`} fill="#ececec" stroke="#000" strokeWidth="2" />
    ))}
  </svg>
)

const PROVINCE =
  'M491,179 497,185 513,203 517,215 524,228 536,237 545,248 562,254 591,260 600,268 604,280 612,290 652,288 657,303 657,335 664,347 681,356 680,368 674,386 690,397 704,405 712,424 725,430 745,428 758,430 767,423 775,432 783,447 797,450 803,440 817,434 822,452 833,467 840,465 846,447 853,455 861,462 863,484 871,500 886,508 884,570 886,580 900,570 920,575 947,576 950,564 968,566 975,560 990,558 1000,566 1010,568 1009,606 993,617 991,682 972,680 968,690 964,712 966,730 953,740 953,765 945,775 945,792 956,797 957,815 974,826 982,820 1004,818 1006,797 1012,794 1024,800 1022,850 1028,865 1031,893 1048,902 1038,911 1028,915 1030,945 1042,952 1048,965 1048,983 1065,988 1069,1007 1085,1005 1090,998 1125,1003 1135,1006 1145,997 1160,998 1172,1007 1181,1001 1180,950 1195,952 1200,920 1208,917 1210,905 1225,910 1258,907 1262,922 1272,940 1287,965 1309,960 1314,1020 1311,1035 1320,1056 1316,1070 1303,1068 1300,1098 1286,1106 1277,1122 1264,1095 1247,1098 1243,1085 1228,1072 1215,1068 1205,1068 1190,1058 1170,1052 1160,1058 1125,1062 1130,1075 1138,1085 1134,1107 1160,1112 1160,1140 1165,1152 1163,1180 1155,1187 1155,1212 1147,1228 1108,1232 1106,1265 1095,1272 1075,1285 ' +
  '1074,1305 1068,1340 1083,1357 1095,1365 1106,1380 1101,1410 1113,1420 1122,1432 1128,1422 1148,1417 1160,1435 1150,1450 1150,1470 1175,1472 1178,1455 1190,1452 1193,1472 1215,1480 1218,1525 1213,1570 1200,1582 1183,1580 1175,1597 1163,1615 1175,1625 1190,1643 1215,1637 1240,1643 1282,1643 1290,1627 1308,1615 1318,1627 1335,1633 1358,1633 1357,1615 1362,1620 1363,1655 1380,1668 1412,1673 1430,1683 1445,1695 1440,1735 1428,1755 1420,1780 1420,1815 1408,1840 1397,1842 1394,1872 1383,1895 1365,1878 1348,1905 1325,1907 1325,1940 1335,1950 1350,1945 1352,1980 1360,2005 1370,2015 1347,2010 1335,2025 1322,2045 1300,2043 1280,2035 1262,2040 1240,2017 1222,2033 1222,2070 1232,2082 1213,2102 1217,2120 1215,2145 1223,2155 1222,2195 1208,2200 1205,2220 1180,2245 1178,2285 1158,2320 1135,2328 1112,2350 1103,2380 1078,2382 1062,2393 1050,2390 1048,2417 1020,2425 1000,2423 998,2385 992,2372 978,2365 965,2352 945,2360 925,2363 905,2353 872,2363 855,2338 840,2350 823,2345 818,2320 802,2310 800,2285 788,2265 787,2240 775,2248 763,2233 750,2245 738,2240 740,2210 722,2201 705,2210 703,2232 688,2240 693,2255 705,2263 700,2295 680,2305 665,2308 645,2322 625,2340 617,2357 598,2355 593,2343 583,2355 565,2328 570,2310 573,2288 590,2260 607,2253 625,2225 635,2195 615,2180 595,2150 578,2143 550,2142 540,2160 535,2210 508,2215 470,2240 450,2260 435,2245 408,2243 410,2220 395,2190 397,2125 390,2110 387,2080 365,2055 358,2040 342,2040 337,2010 350,1990 342,1975 345,1950 335,1925 315,1908 313,1890 302,1875 303,1850 327,1845 330,1828 326,1805 348,1792 365,1768 390,1763 387,1740 400,1690 400,1300 350,1068 ' +
  '333,1080 328,1098 305,1115 300,1103 278,1108 273,1138 240,1138 228,1130 222,1105 205,1080 190,1072 167,1078 160,1068 135,1062 130,1030 128,995 136,975 132,945 118,930 87,930 80,912 60,915 42,895 47,875 55,872 52,855 42,850 48,830 60,822 70,830 75,847 95,852 125,852 130,835 145,830 163,828 165,798 173,790 175,757 183,747 172,725 167,700 178,692 176,667 195,672 197,650 210,645 240,648 262,635 252,600 250,570 243,560 258,552 260,515 240,512 240,495 247,460 258,442 268,433 293,427 312,438 328,452 362,457 368,470 362,492 375,508 387,520 390,548 410,565 418,580 440,572 447,575 465,557 485,550 497,540 500,520 515,515 537,498 558,505 562,470 548,455 540,432 527,415 527,400 537,385 530,375 532,352 542,347 537,335 520,332 505,342 480,342 477,322 455,308 445,295 432,290 424,275 415,267 424,255 430,237 430,215 443,220 455,200 475,190Z'

const CITY =
  'M365,95 375,103 378,115 395,122 400,138 410,160 421,172 428,160 443,155 445,140 455,130 467,132 472,148 487,163 508,165 515,180 516,205 524,215 525,250 522,270 526,300 530,340 550,350 570,365 575,392 598,390 590,402 585,420 577,432 590,455 595,475 597,540 615,557 655,555 665,548 680,550 720,546 735,555 740,572 725,577 718,570 700,585 690,605 687,640 683,665 660,680 652,712 640,722 625,728 612,745 605,757 575,762 560,755 548,752 535,765 528,773 530,755 533,735 532,710 515,725 505,732 493,715 477,708 465,728 445,745 432,757 415,740 390,747 385,765 378,779 370,768 352,768 340,740 335,722 322,732 305,736 292,715 285,697 270,692 255,712 248,720 235,705 233,675 212,668 208,645 185,635 190,605 185,570 200,550 205,530 220,520 220,495 245,478 270,455 300,450 320,453 342,447 342,425 340,405 345,375 350,350 352,290 347,240 342,185 337,150 328,135 332,115 350,108Z'

const COUNTIES = [
  'M350,360 375,370 385,368 400,380 432,385 440,370 455,340 475,338 495,350 522,340 530,335',
  'M432,385 430,440 425,458 400,460 385,450 370,445 342,440',
  'M425,458 412,462 408,485 390,492 375,508 395,522 420,540 427,555 425,585 440,575 450,580 465,590 470,575 470,555 505,560',
  'M522,340 517,370 522,400 520,450 523,490 515,520 505,560',
  'M505,560 515,590 522,640 530,640 528,665 535,665 540,635 560,620 570,602 600,590 612,575 615,557',
  'M530,665 527,680 512,690 515,725',
  'M425,570 410,572 390,575 385,590 392,640 378,670 370,685 358,700 355,720 335,735'
]

const HANDLES = [
  [1035, 542], [1599, 542], [2165, 542],
  [1035, 956], [2165, 956],
  [1035, 1368], [1599, 1368], [2165, 1368]
]

const MapCanvas = () => (
  <svg className="block h-full w-full" shapeRendering="crispEdges" role="img" aria-label="布局视图">
    <g transform="translate(-630 -209)" fill="none">
      {/* Page border */}
      <rect x="994" y="501" width="1210" height="906" fill="#fff" stroke="#000" strokeWidth="4" />

      {/* Layers */}
      <g transform="translate(1240 520) scale(0.4847 0.3333)">
        <path d={PROVINCE} fill="#bed2ff" stroke="#ff7f7f" strokeWidth="2.5" vectorEffect="non-scaling-stroke" />
      </g>
      <g transform="translate(1240 840) scale(0.4847 0.3333)" stroke="#6e6e6e" strokeWidth="2.5">
        <path d={CITY} fill="#c8f5f2" vectorEffect="non-scaling-stroke" />
        {COUNTIES.map(d => <path key={d} d={d} vectorEffect="non-scaling-stroke" />)}
      </g>

      {/* Data frame with its selection outline */}
      <path d="M1040 538H2160M1031 548V1362M1040 1372H2160M2169 548V1362" stroke="#ababab" strokeWidth="2" strokeDasharray="6 6" />
      <path d="M1032 541H2166M1034 539V1369M1032 1367H2166M2164 539V1369" stroke="#000" strokeWidth="4" />
      <path d="M1038 542H2164M1035 545V1367" stroke="#14cccc" strokeWidth="2" strokeDasharray="10 2" />
      <path d="M1036 1368H2164M2165 543V1367" stroke="#14cccc" strokeWidth="2" strokeDasharray="6 6" />

      {/* Handles */}
      {HANDLES.map(([x, y]) => (
        <rect key={`${x}-${y}`} x={x - 6} y={y - 6} width="12" height="12" fill="#14cccc" stroke="#000" strokeWidth="2" />
      ))}

      {/* Guides */}
      <path d="M1035 209V4000M2165 209V4000M630 542H6000M630 1368H6000" stroke="#00ffff" strokeWidth="2" strokeDasharray="2 2" />
    </g>
  </svg>
)

const LayoutView = () => (
  <main className="ml-2 flex min-w-0 flex-1 flex-col border-t-2 border-l-2 border-[#a0a0a0]">
    <div className="flex min-h-0 flex-1 flex-col border-t-2 border-l-2 border-[#696969] bg-[#f0f0f0]">
      <div className="h-[38px] shrink-0 overflow-hidden pt-1">
        <TopRuler />
      </div>
      <div className="flex min-h-0 flex-1">
        <div className="w-[38px] shrink-0 overflow-hidden">
          <SideRuler />
        </div>
        <div className="min-w-0 flex-1 border-t-2 border-l-2 border-[#a0a0a0]">
          <div className="h-full overflow-hidden border-t-2 border-l-2 border-[#696969] bg-white">
            <MapCanvas />
          </div>
        </div>
      </div>
    </div>
  </main>
)

export default function App() {
  return (
    <div className={clsx('relative flex h-screen flex-col overflow-hidden bg-linear-to-r from-[#f0f0f0] to-[#fbfbfb] text-black', UI_FONT)}>
      <MenuBar />
      <Toolbars />
      <div className="flex min-h-0 flex-1">
        <ContentsPanel />
        <LayoutView />
      </div>
      <FullExtentTip />
      <div className="absolute right-1 bottom-2.5 font-['Noto_Sans',sans-serif] text-[46px] leading-[60px] font-light text-[#e0e0e0] [text-shadow:1px_2px_1px_#a6a6a6]">
        CSDN @heaven_828
      </div>
    </div>
  )
}
